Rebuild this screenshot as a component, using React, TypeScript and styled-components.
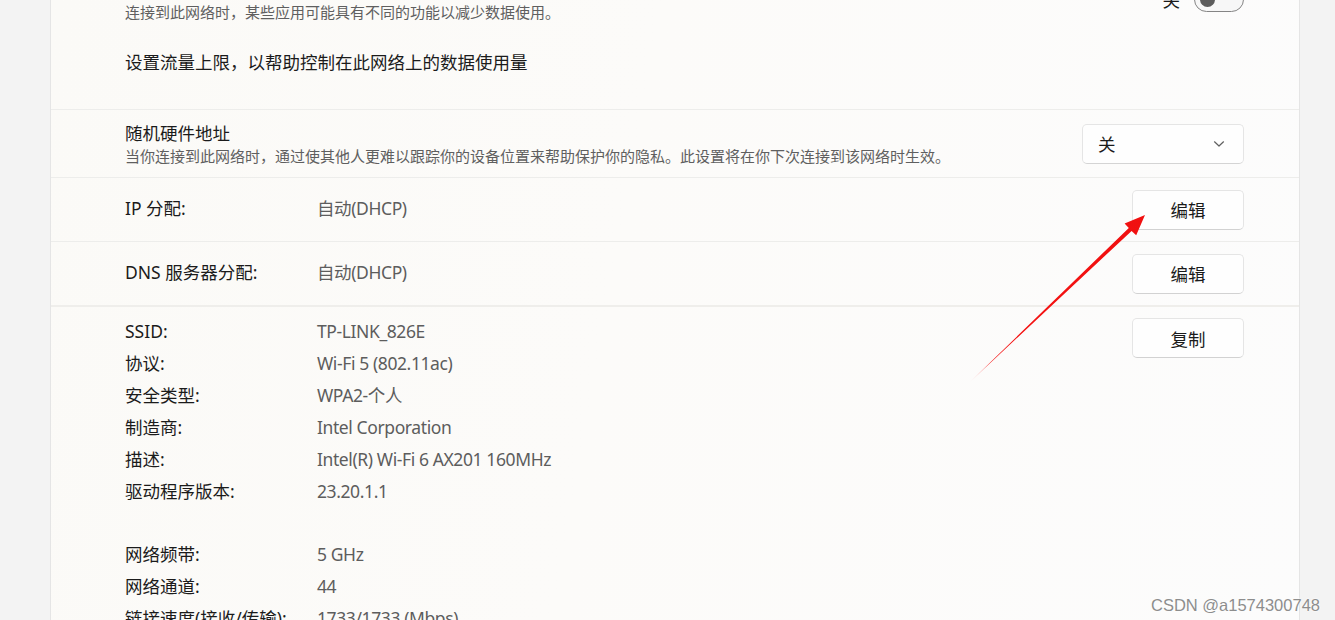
import styled, { createGlobalStyle } from 'styled-components';
import { Fragment, FunctionComponent } from 'react';

const GlobalStyle = createGlobalStyle`
  html, body {
    margin: 0;
    padding: 0;
    height: 620px;
    overflow: hidden;
    background: #f3f3f3;
  }
  * { box-sizing: border-box; }
`;

const font = `"Noto Sans", "Noto Sans CJK SC", sans-serif`;

const Page = styled.div`
  position: relative;
  display: grid;
  grid-template-columns: 50px 1250px 1fr;
  height: 620px;
  overflow: hidden;
  font-family: ${font};
  color: #1b1b1b;
`;

const Gutter = styled.div`
  background: #f3f3f3;
`;

const Card = styled.div`
  border-left: 1px solid #e5e5e5;
  border-right: 1px solid #e5e5e5;
  background: linear-gradient(100deg, #fbfaf7 0%, #fcfbf9 45%, #fcfcfc 100%);
`;

const Scroller = styled.div`
  margin-top: -34px;
  display: flex;
  flex-direction: column;
`;

// heights include the bottom border
const Row = styled.div<{ $h?: number; $sep?: number }>`
  display: flex;
  align-items: center;
  justify-content: space-between;
  min-height: ${(p) => p.$h ?? 64}px;
  padding: 0 55px 0 74px;
  border-bottom: ${(p) => p.$sep ?? 1}px solid ${(p) => ((p.$sep ?? 1) > 1 ? '#efeeeb' : '#ededeb')};
`;

const TextBlock = styled.div`
  display: flex;
  flex-direction: column;
  padding: 11px 0 10px;
`;

const Title = styled.div`
  font-size: 17.5px;
  line-height: 24px;
  color: #1b1b1b;
`;

const Sub = styled.div`
  font-size: 15px;
  line-height: 22px;
  color: #5f5f5f;
`;

const LinkBlock = styled.div`
  padding: 16px 0 34px 74px;
  font-size: 17.5px;
  line-height: 26px;
  border-bottom: 1px solid #ededeb;
`;

const ToggleWrap = styled.div`
  display: flex;
  align-items: center;
  gap: 14px;
  font-size: 17.5px;
`;

const Toggle = styled.div`
  position: relative;
  width: 50px;
  height: 25px;
  border: 1px solid #858585;
  border-radius: 13px;
  background: #f7f7f7;
  &::after {
    content: '';
    position: absolute;
    left: 5px;
    top: 4px;
    width: 15px;
    height: 15px;
    border-radius: 50%;
    background: #5c5c5c;
  }
`;

const Select = styled.div`
  width: 162px;
  height: 40px;
  display: flex;
  align-items: center;
  justify-content: space-between;
  padding: 0 18px 0 15px;
  background: #fefefe;
  border: 1px solid #e5e5e5;
  border-bottom-color: #d4d4d4;
  border-radius: 5px;
  font-size: 17.5px;
`;

const Button = styled.div<{ $mt?: number }>`
  width: 112px;
  height: 40px;
  margin-top: ${(p) => p.$mt ?? 0}px;
  display: flex;
  align-items: center;
  justify-content: center;
  background: #fefefe;
  border: 1px solid #e5e5e5;
  border-bottom-color: #d2d2d2;
  border-radius: 5px;
  font-size: 17.5px;
  color: #1b1b1b;
`;

const Pair = styled.div<{ $lift?: number }>`
  display: grid;
  grid-template-columns: 192px auto;
  font-size: 17.5px;
  line-height: 32px;
  padding-bottom: ${(p) => p.$lift ?? 0}px;
`;

const Label = styled.span`
  color: #1b1b1b;
`;

const Value = styled.span`
  color: #5d5d5d;
  letter-spacing: -0.4px;
`;

const Details = styled.div`
  display: flex;
  justify-content: space-between;
  align-items: flex-start;
  padding: 8px 55px 0 74px;
`;

const Groups = styled.div`
  display: flex;
  flex-direction: column;
  gap: 31px;
`;

const Watermark = styled.div`
  position: absolute;
  right: 15px;
  bottom: 5px;
  font-family: "Liberation Sans", Arial, sans-serif;
  font-size: 16.5px;
  color: #8d8d8d;
  text-shadow: 0 0 2px #fff, 0 0 2px #fff;
`;

const Overlay = styled.svg`
  position: absolute;
  left: 0;
  top: 0;
  pointer-events: none;
`;

const Chevron = () => (
  <svg width="12" height="8" viewBox="0 0 12 8">
    <path d="M1.5 1.8 L6 6 L10.5 1.8" fill="none" stroke="#5f5f5f" strokeWidth="1.2" strokeLinecap="round" strokeLinejoin="round" />
  </svg>
);

const groupA: [string, string][] = [
  ['SSID:', 'TP-LINK_826E'],
  ['协议:', 'Wi-Fi 5 (802.11ac)'],
  ['安全类型:', 'WPA2-个人'],
  ['制造商:', 'Intel Corporation'],
  ['描述:', 'Intel(R) Wi-Fi 6 AX201 160MHz'],
  ['驱动程序版本:', '23.20.1.1'],
];

const groupB: [string, string][] = [
  ['网络频带:', '5 GHz'],
  ['网络通道:', '44'],
  ['链接速度(接收/传输):', '1733/1733 (Mbps)'],
  ['链接本地 IPv6 地址:', 'fe80::1c4b:9a2e:7d10:3f6a%12'],
];

const PairList: FunctionComponent<{ items: [string, string][] }> = ({ items }) => (
  <Pair>
    {items.map(([k, v]) => (
      <Fragment key={k}>
        <Label>{k}</Label>
        <Value>{v}</Value>
      </Fragment>
    ))}
  </Pair>
);

const Arrow = () => (
  // tail (970,382) -> tip (1145,215)
  <Overlay width="1335" height="620" viewBox="0 0 1335 620">
    <defs>
      <linearGradient id="shaft" x1="970" y1="382" x2="1145" y2="215" gradientUnits="userSpaceOnUse">
        <stop offset="0" stopColor="#ff3a3a" stopOpacity="0.2" />
        <stop offset="0.12" stopColor="#f51313" />
        <stop offset="1" stopColor="#f01010" />
      </linearGradient>
    </defs>
    <polygon
      points="970,382 1131.6,230.9 1136.2,235.2 1145,215 1124.6,223.6 1128.8,227.9"
      fill="url(#shaft)"
    />
  </Overlay>
);

const App: FunctionComponent = () => {
  return (
    <>
      <GlobalStyle />
      <Page>
        <Gutter />
        <Card>
          <Scroller>
            <Row $h={67} $sep={0}>
              <TextBlock>
                <Title>按流量计费的连接</Title>
                <Sub>连接到此网络时，某些应用可能具有不同的功能以减少数据使用。</Sub>
              </TextBlock>
              <ToggleWrap>
                关
                <Toggle />
              </ToggleWrap>
            </Row>
            <LinkBlock>设置流量上限，以帮助控制在此网络上的数据使用量</LinkBlock>

            <Row $h={68}>
              <TextBlock>
                <Title>随机硬件地址</Title>
                <Sub>当你连接到此网络时，通过使其他人更难以跟踪你的设备位置来帮助保护你的隐私。此设置将在你下次连接到该网络时生效。</Sub>
              </TextBlock>
              <Select>
                关
                <Chevron />
              </Select>
            </Row>

            <Row>
              <Pair $lift={3}>
                <Label>IP 分配:</Label>
                <Value>自动(DHCP)</Value>
              </Pair>
              <Button>编辑</Button>
            </Row>

            <Row $h={65} $sep={2}>
              <Pair $lift={3}>
                <Label>DNS 服务器分配:</Label>
                <Value>自动(DHCP)</Value>
              </Pair>
              <Button>编辑</Button>
            </Row>

            <Details>
              <Groups>
                <PairList items={groupA} />
                <PairList items={groupB} />
              </Groups>
              <Button $mt={3}>复制</Button>
            </Details>
          </Scroller>
        </Card>
        <Gutter />
        <Arrow />
        <Watermark>CSDN @a1574300748</Watermark>
      </Page>
    </>
  );
};

export default App;
